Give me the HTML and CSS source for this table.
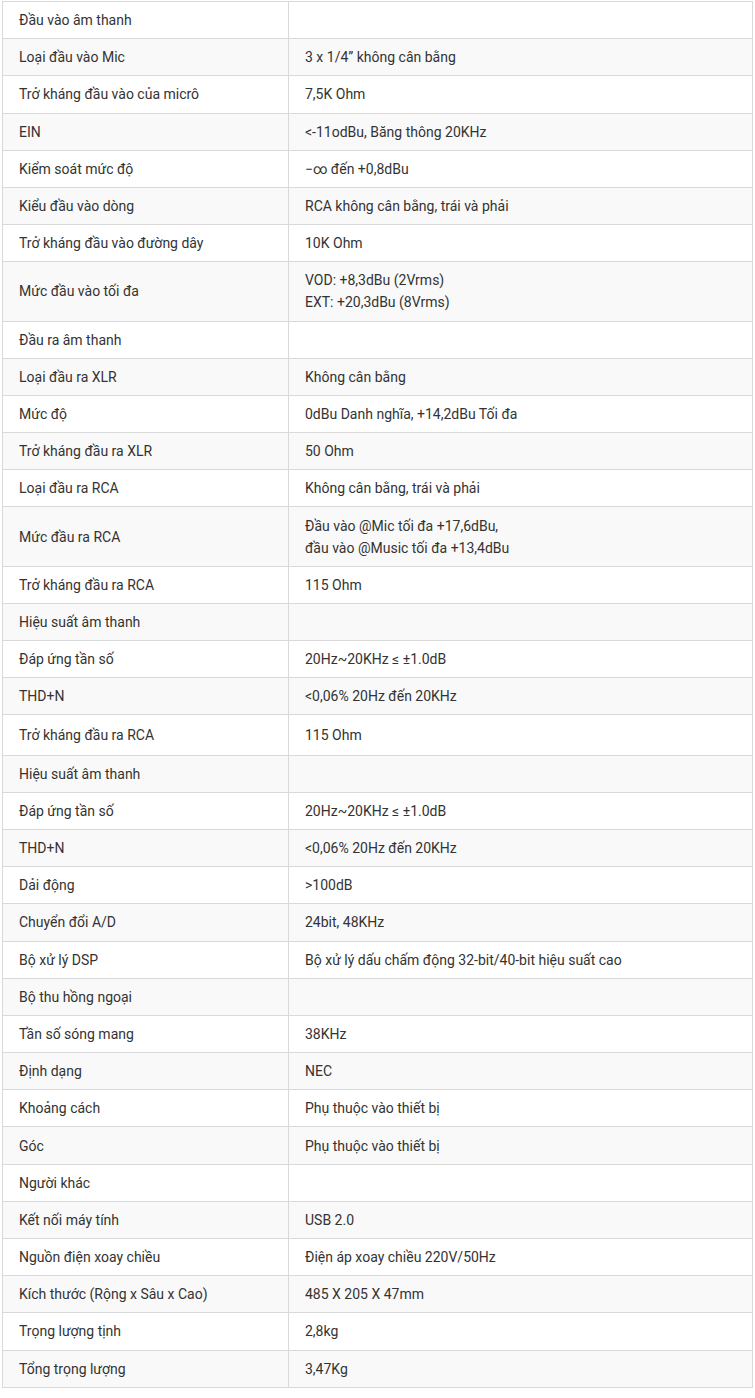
FILE: index.html
```html
<!DOCTYPE html>
<html lang="vi">
<head>
<meta charset="utf-8">
<title>Thông số kỹ thuật</title>
<link rel="stylesheet" href="styles.css">
</head>
<body>
<div class="wrap">
<table class="spec">
<colgroup><col class="c1"><col class="c2"></colgroup>
<tbody>
<tr><td>Đầu vào âm thanh</td><td></td></tr>
<tr><td>Loại đầu vào Mic</td><td>3 x 1/4” không cân bằng</td></tr>
<tr><td>Trở kháng đầu vào của micrô</td><td>7,5K Ohm</td></tr>
<tr><td>EIN</td><td>&lt;-11odBu, Băng thông 20KHz</td></tr>
<tr><td>Kiểm soát mức độ</td><td>−∞ đến +0,8dBu</td></tr>
<tr><td>Kiểu đầu vào dòng</td><td>RCA không cân bằng, trái và phải</td></tr>
<tr><td>Trở kháng đầu vào đường dây</td><td>10K Ohm</td></tr>
<tr><td>Mức đầu vào tối đa</td><td>VOD: +8,3dBu (2Vrms)<br>EXT: +20,3dBu (8Vrms)</td></tr>
<tr><td>Đầu ra âm thanh</td><td></td></tr>
<tr><td>Loại đầu ra XLR</td><td>Không cân bằng</td></tr>
<tr><td>Mức độ</td><td>0dBu Danh nghĩa, +14,2dBu Tối đa</td></tr>
<tr><td>Trở kháng đầu ra XLR</td><td>50 Ohm</td></tr>
<tr><td>Loại đầu ra RCA</td><td>Không cân bằng, trái và phải</td></tr>
<tr><td>Mức đầu ra RCA</td><td>Đầu vào @Mic tối đa +17,6dBu,<br>đầu vào @Music tối đa +13,4dBu</td></tr>
<tr><td>Trở kháng đầu ra RCA</td><td>115 Ohm</td></tr>
<tr><td>Hiệu suất âm thanh</td><td></td></tr>
<tr><td>Đáp ứng tần số</td><td>20Hz~20KHz ≤ ±1.0dB</td></tr>
<tr><td>THD+N</td><td>&lt;0,06% 20Hz đến 20KHz</td></tr>
<tr class="tall"><td>Trở kháng đầu ra RCA</td><td>115 Ohm</td></tr>
<tr><td>Hiệu suất âm thanh</td><td></td></tr>
<tr><td>Đáp ứng tần số</td><td>20Hz~20KHz ≤ ±1.0dB</td></tr>
<tr><td>THD+N</td><td>&lt;0,06% 20Hz đến 20KHz</td></tr>
<tr><td>Dải động</td><td>&gt;100dB</td></tr>
<tr><td>Chuyển đổi A/D</td><td>24bit, 48KHz</td></tr>
<tr><td>Bộ xử lý DSP</td><td>Bộ xử lý dấu chấm động 32-bit/40-bit hiệu suất cao</td></tr>
<tr><td>Bộ thu hồng ngoại</td><td></td></tr>
<tr><td>Tần số sóng mang</td><td>38KHz</td></tr>
<tr><td>Định dạng</td><td>NEC</td></tr>
<tr><td>Khoảng cách</td><td>Phụ thuộc vào thiết bị</td></tr>
<tr><td>Góc</td><td>Phụ thuộc vào thiết bị</td></tr>
<tr><td>Người khác</td><td></td></tr>
<tr><td>Kết nối máy tính</td><td>USB 2.0</td></tr>
<tr><td>Nguồn điện xoay chiều</td><td>Điện áp xoay chiều 220V/50Hz</td></tr>
<tr><td>Kích thước (Rộng x Sâu x Cao)</td><td>485 X 205 X 47mm</td></tr>
<tr><td>Trọng lượng tịnh</td><td>2,8kg</td></tr>
<tr><td>Tổng trọng lượng</td><td>3,47Kg</td></tr>
</tbody>
</table>
</div>
</body>
</html>
```

FILE: styles.css
```css
html, body {
  margin: 0;
  padding: 0;
  background: #fff;
}
.wrap {
  padding: 1px 2px;
}
.spec {
  width: 751px;
  border-collapse: collapse;
  table-layout: fixed;
  font-family: Roboto, "Noto Sans", Arial, sans-serif;
  font-size: 14px;
  color: #333;
}
.spec .c1 { width: 286px; }
.spec td {
  border: 1px solid #d9d9d9;
  padding: 7.1px 16px;
  line-height: 22px;
  vertical-align: middle;
  text-align: left;
}
.spec tr:nth-child(even) td {
  background: #f9f9f9;
}
.spec tr.tall td {
  padding-top: 8.6px;
  padding-bottom: 8.6px;
}
```
